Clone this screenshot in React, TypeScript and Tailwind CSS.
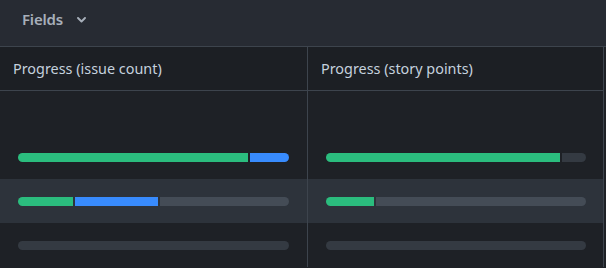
import React from 'react';

type Seg = { pct: number; color: string };

const rows: { left: Seg[] | null; right: Seg[] | null; active?: boolean }[] = [
  { left: null, right: null },
  {
    left: [
      { pct: 85.5, color: 'bg-[#2bbd7e]' },
      { pct: 14.5, color: 'bg-[#388bfd]' },
    ],
    right: [
      { pct: 90.6, color: 'bg-[#2bbd7e]' },
      { pct: 9.4, color: 'bg-[#343a42]' },
    ],
  },
  {
    left: [
      { pct: 20.5, color: 'bg-[#2bbd7e]' },
      { pct: 31, color: 'bg-[#388bfd]' },
      { pct: 48.5, color: 'bg-[#444c56]' },
    ],
    right: [
      { pct: 18.5, color: 'bg-[#2bbd7e]' },
      { pct: 81.5, color: 'bg-[#444c56]' },
    ],
    active: true,
  },
  {
    left: [{ pct: 100, color: 'bg-[#343a42]' }],
    right: [{ pct: 100, color: 'bg-[#343a42]' }],
  },
];

const Bar = ({ segs }: { segs: Seg[] | null }) => {
  if (!segs) return null;
  return (
    <div className="flex w-full h-[9px] gap-[2px] rounded-full overflow-hidden">
      {segs.map((s, i) => (
        <div key={i} className={s.color} style={{ width: `${s.pct}%` }} />
      ))}
    </div>
  );
};

export default function App() {
  return (
    <div className="w-[606px] h-[268px] bg-[#1e2126] overflow-hidden font-['Noto_Sans',sans-serif]">
      {/* Toolbar */}
      <div className="h-[47px] bg-[#272b33] border-b border-[#3d444d] flex items-center pl-[22px] pb-[7px]">
        <span className="text-[15px] font-semibold text-[#a7afba] tracking-[-0.2px]">Fields</span>
        <svg className="ml-[14px] mt-[1px]" width="9" height="6" viewBox="0 0 9 6" fill="none">
          <path d="M1 1l3.5 3.5L8 1" stroke="#a7afba" strokeWidth="1.9" strokeLinecap="round" strokeLinejoin="round" />
        </svg>
      </div>

      {/* Table */}
      <div className="grid grid-cols-[308px_296px]">
        <div className="h-[44px] border-b border-r border-[#3d444d] bg-[#1c1f24] flex items-center pl-[13px] text-[14.4px] text-[#c5d1de]">
          Progress (issue count)
        </div>
        <div className="h-[44px] border-b border-r border-[#3d444d] bg-[#1c1f24] flex items-center pl-[13px] text-[14.4px] text-[#c5d1de]">
          Progress (story points)
        </div>
        {rows.map((r, i) => (
          <React.Fragment key={i}>
            <div
              className={`h-[44px] border-r border-[#3d444d] flex items-center px-[18px] ${
                r.active ? 'bg-[#2d333b]' : ''
              }`}
            >
              <Bar segs={r.left} />
            </div>
            <div
              className={`h-[44px] border-r border-[#3d444d] flex items-center pl-[18px] pr-[17px] ${
                r.active ? 'bg-[#2d333b]' : ''
              }`}
            >
              <Bar segs={r.right} />
            </div>
          </React.Fragment>
        ))}
      </div>
    </div>
  );
}
